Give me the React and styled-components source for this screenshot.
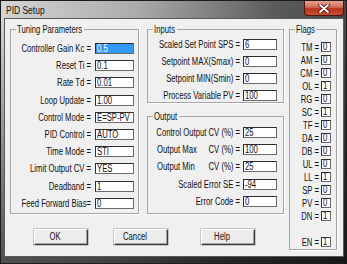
import styled, { createGlobalStyle } from "styled-components";

// no narrow font here, so text is squeezed sideways to the dialog's proportions
const SQUEEZE = 0.77;

const GlobalStyle = createGlobalStyle`
  html, body {
    margin: 0;
    padding: 0;
  }
  body {
    width: 347px;
    height: 264px;
    overflow: hidden;
    background: #2b2b2b;
    font-family: "Liberation Sans", Arial, sans-serif;
  }
`;

const tuning = [
    ["Controller Gain Kc =", "0.5", true],
    ["Reset Ti  =", "0.1"],
    ["Rate Td =", "0.01"],
    ["Loop Update =", "1.00"],
    ["Control Mode =", "E=SP-PV"],
    ["PID Control =", "AUTO"],
    ["Time Mode =", "STI"],
    ["Limit Output CV =", "YES"],
    ["Deadband =", "1"],
    ["Feed Forward Bias=", "0"],
];

const inputs = [
    ["Scaled Set Point SPS =", "6"],
    ["Setpoint MAX(Smax) =", "0"],
    ["Setpoint MIN(Smin) =", "0"],
    ["Process Variable PV =", "100"],
];

const outputs = [
    ["Control Output CV (%) =", "", "25"],
    ["Output Max", "CV (%) =", "100"],
    ["Output Min", "CV (%) =", "25"],
    ["Scaled Error SE =", "", "-94"],
    ["Error Code =", "", "0"],
];

const flags = [
    ["TM", 0], ["AM", 0], ["CM", 0], ["OL", 1], ["RG", 0], ["SC", 1],
    ["TF", 0], ["DA", 0], ["DB", 0], ["UL", 0], ["LL", 1], ["SP", 0],
    ["PV", 0], ["DN", 1],
];

export default function App() {
    return (
        <>
            <GlobalStyle />
            <Window>
                <TitleBar>
                    <Title><Squeeze>PID Setup</Squeeze></Title>
                    <CloseButton>
                        <svg width="12" height="9" viewBox="0 0 12 9">
                            <path d="M2 1 L10 8 M10 1 L2 8" stroke="#3a0c06" strokeWidth="3.4" strokeLinecap="round" />
                            <path d="M2 1 L10 8 M10 1 L2 8" stroke="#ffffff" strokeWidth="1.8" strokeLinecap="round" />
                        </svg>
                    </CloseButton>
                </TitleBar>
                <Client>
                    <LeftArea>
                        <GroupsRow>
                            <Group $width={129}>
                                <Legend $w={66}><Squeeze>Tuning Parameters</Squeeze></Legend>
                                <Rows $pt={8} $pb={4} $gap={6.2} $rowH={11} $cols="80px 39px" $colGap={4}>
                                    {tuning.map(([label, value, selected]) => (
                                        <Row key={label}>
                                            <Label><Squeeze $align="right">{label}</Squeeze></Label>
                                            <Field $selected={selected}><Squeeze>{value}</Squeeze></Field>
                                        </Row>
                                    ))}
                                </Rows>
                            </Group>
                            <Column>
                                <Group>
                                    <Legend $w={22}><Squeeze>Inputs</Squeeze></Legend>
                                    <Rows $pt={4} $pb={1} $gap={6} $rowH={11} $cols="92px 34px" $colGap={3}>
                                        {inputs.map(([label, value]) => (
                                            <Row key={label}>
                                                <Label><Squeeze $align="right">{label}</Squeeze></Label>
                                                <Field><Squeeze>{value}</Squeeze></Field>
                                            </Row>
                                        ))}
                                    </Rows>
                                </Group>
                                <Group $grow>
                                    <Legend $w={24}><Squeeze>Output</Squeeze></Legend>
                                    <Rows $pt={5} $pb={5} $gap={6.2} $rowH={11} $cols="92px 34px" $colGap={3}>
                                        {outputs.map(([label, unit, value]) => (
                                            <Row key={label}>
                                                <Label>
                                                    {unit ? (
                                                        <SplitSqueeze>
                                                            <span>{label}</span>
                                                            <span>{unit}</span>
                                                        </SplitSqueeze>
                                                    ) : (
                                                        <Squeeze $align="right">{label}</Squeeze>
                                                    )}
                                                </Label>
                                                <Field><Squeeze>{value}</Squeeze></Field>
                                            </Row>
                                        ))}
                                    </Rows>
                                </Group>
                            </Column>
                        </GroupsRow>
                        <ButtonRow>
                            <Button><Squeeze $align="center">OK</Squeeze></Button>
                            <Button><Squeeze $align="center">Cancel</Squeeze></Button>
                            <Button $push><Squeeze $align="center">Help</Squeeze></Button>
                        </ButtonRow>
                    </LeftArea>
                    <Group $width={48} $height={226}>
                        <Legend $w={19}><Squeeze>Flags</Squeeze></Legend>
                        <Rows $pt={7} $pb={2} $gap={3} $rowH={10} $cols="29px 10px" $colGap={2}>
                            {flags.map(([name, value]) => (
                                <Row key={name}>
                                    <Label><Squeeze $align="right">{name} =</Squeeze></Label>
                                    <Flag><Squeeze>{value}</Squeeze></Flag>
                                </Row>
                            ))}
                            <Row $mt={13}>
                                <Label><Squeeze $align="right">EN =</Squeeze></Label>
                                <Flag><Squeeze>1</Squeeze></Flag>
                            </Row>
                        </Rows>
                    </Group>
                </Client>
            </Window>
        </>
    );
}

const Squeeze = styled.span`
    display: block;
    width: calc(100% / ${SQUEEZE});
    transform: scaleX(${SQUEEZE});
    transform-origin: 0 50%;
    white-space: nowrap;
    text-align: ${(p) => p.$align || "left"};
`
const SplitSqueeze = styled(Squeeze)`
    display: flex;
    justify-content: space-between;
    padding-left: ${9 / SQUEEZE}px;
    box-sizing: border-box;
`
const Window = styled.div`
    width: 347px;
    height: 264px;
    box-sizing: border-box;
    display: flex;
    flex-direction: column;
    border: 1px solid #1c1c1c;
    background:
        linear-gradient(to bottom, rgba(0, 0, 0, 0) 8%, rgba(0, 0, 0, 0.6) 100%),
        linear-gradient(100deg, #d4d4d4 0%, #ababab 35%, #5c5c5c 70%, #3a3a3a 100%);
`
const TitleBar = styled.div`
    height: 17px;
    display: flex;
    flex-direction: row;
    align-items: flex-start;
`
const Title = styled.span`
    flex: 1;
    padding: 3px 0 0 5px;
    font-size: 11px;
    line-height: 12px;
    color: #111111;
`
const CloseButton = styled.div`
    margin-right: 2px;
    width: 40px;
    height: 15px;
    box-sizing: border-box;
    display: flex;
    align-items: center;
    justify-content: center;
    border: 1px solid #4a140c;
    border-top: none;
    border-radius: 0 0 4px 4px;
    background: linear-gradient(#e2a392 0%, #d06a52 45%, #b8321c 55%, #c9502e 100%);
`
const Client = styled.div`
    flex: 1;
    margin: 0 2px 6px 3px;
    padding: 5px 0 0 5px;
    display: flex;
    flex-direction: row;
    align-items: flex-start;
    gap: 5px;
    background: #f0f0f0;
    border: 1px solid #5a5a5a;
`
const LeftArea = styled.div`
    display: flex;
    flex-direction: column;
`
const GroupsRow = styled.div`
    display: flex;
    flex-direction: row;
    align-items: stretch;
    gap: 8px;
`
const Column = styled.div`
    width: 137px;
    display: flex;
    flex-direction: column;
    gap: 8px;
`
const Group = styled.fieldset`
    margin: 0;
    padding: 0;
    min-width: 0;
    box-sizing: border-box;
    width: ${(p) => (p.$width ? `${p.$width}px` : "auto")};
    height: ${(p) => (p.$height ? `${p.$height}px` : "auto")};
    flex: ${(p) => (p.$grow ? 1 : "none")};
    border: 1px solid #a6a6a6;
    box-shadow: 1px 1px 0 #ffffff;
`
const Legend = styled.legend`
    width: ${(p) => p.$w}px;
    margin-left: 5px;
    padding: 0 1px;
    font-size: 10px;
    line-height: 11px;
    color: #111111;
`
const Rows = styled.div`
    display: grid;
    grid-template-columns: ${(p) => p.$cols};
    grid-auto-rows: ${(p) => p.$rowH}px;
    row-gap: ${(p) => p.$gap}px;
    column-gap: ${(p) => p.$colGap}px;
    padding: ${(p) => `${p.$pt}px 0 ${p.$pb}px 0`};
`
const Row = styled.div`
    display: contents;
    > * {
        margin-top: ${(p) => (p.$mt ? `${p.$mt}px` : 0)};
    }
`
const Label = styled.div`
    font-size: 10px;
    line-height: 11px;
    color: #111111;
`
const Field = styled.div`
    height: 11px;
    box-sizing: border-box;
    padding-left: 1px;
    font-size: 10px;
    line-height: 9px;
    color: ${(p) => (p.$selected ? "#ffffff" : "#111111")};
    background: ${(p) => (p.$selected ? "#3399ff" : "#ffffff")};
    border: 1px solid #2e2e2e;
    border-right-color: #6a6a6a;
    border-bottom-color: #6a6a6a;
    overflow: hidden;
`
const Flag = styled(Field)`
    height: 10px;
    line-height: 8px;
`
const ButtonRow = styled.div`
    display: flex;
    flex-direction: row;
    gap: 26px;
    margin-top: 15px;
    padding-left: 24px;
`
const Button = styled.div`
    width: 54px;
    height: 16px;
    box-sizing: border-box;
    margin-left: ${(p) => (p.$push ? "7px" : 0)};
    display: flex;
    align-items: center;
    font-size: 10px;
    color: #111111;
    background: #ececec;
    border: 1px solid;
    border-color: #ffffff #3c3c3c #3c3c3c #ffffff;
    box-shadow: inset -1px -1px 0 #a0a0a0, 0 0 0 0.5px #9a9a9a;
`
